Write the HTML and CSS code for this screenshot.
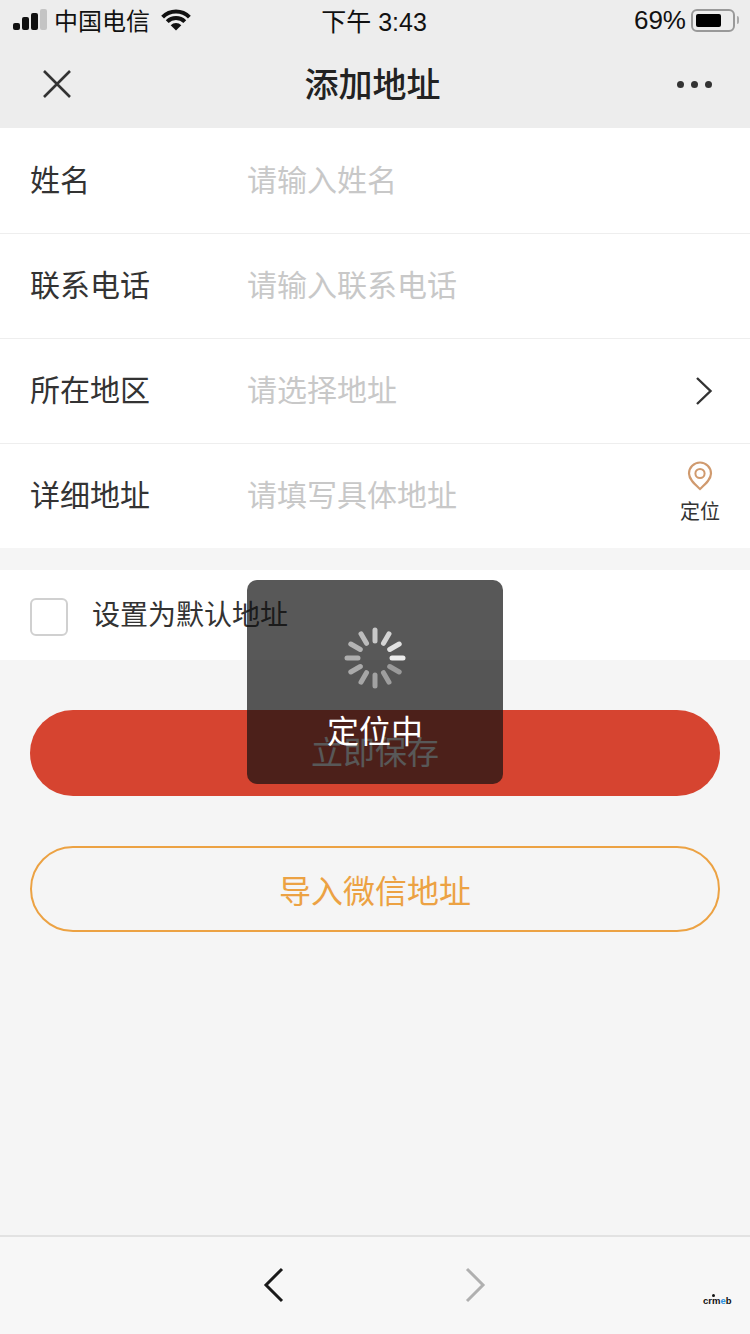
FILE: index.html
```html
<!DOCTYPE html>
<html lang="zh-CN">
<head>
  <meta charset="UTF-8">
  <meta name="viewport" content="width=device-width, initial-scale=1.0">
  <title>添加地址</title>
  <link rel="stylesheet" href="styles.css">
</head>
<body>
  <div class="page">
    <header class="top">
      <div class="status">
        <div class="status-left">
          <div class="signal"><i class="s1"></i><i class="s2"></i><i class="s3"></i><i class="s4"></i></div>
          <span>中国电信</span>
          <svg class="wifi" width="30" height="22" viewBox="0 0 30 22">
            <path d="M1.600 8.100A19 19 0 0 1 28.400 8.100" fill="none" stroke="#111" stroke-width="4"/>
            <path d="M6.200 12.700A12.500 12.500 0 0 1 23.800 12.700" fill="none" stroke="#111" stroke-width="4"/>
            <path d="M9.700 16.200A7.500 7.500 0 0 1 20.300 16.200L15 21.500z" fill="#111"/>
          </svg>
        </div>
        <div class="status-time">下午 3:43</div>
        <div class="status-right">
          <span>69%</span>
          <div class="battery"><div class="battery-fill"></div></div>
          <div class="battery-tip"></div>
        </div>
      </div>
      <div class="nav">
        <svg width="30" height="30" viewBox="0 0 30 30">
          <path d="M2 2l26 26M28 2L2 28" stroke="#333" stroke-width="2.6" fill="none"/>
        </svg>
        <h1>添加地址</h1>
        <div class="nav-more"><i></i><i></i><i></i></div>
      </div>
    </header>

    <form class="form">
      <div class="row">
        <label>姓名</label>
        <div class="placeholder">请输入姓名</div>
      </div>
      <div class="row">
        <label>联系电话</label>
        <div class="placeholder">请输入联系电话</div>
      </div>
      <div class="row">
        <label>所在地区</label>
        <div class="placeholder">请选择地址</div>
        <svg class="row-arrow" width="18" height="30" viewBox="0 0 18 30">
          <path d="M2 2l13.500 13L2 28" stroke="#333" stroke-width="2.4" fill="none"/>
        </svg>
      </div>
      <div class="row">
        <label>详细地址</label>
        <div class="placeholder">请填写具体地址</div>
        <div class="locate">
          <svg width="26" height="30" viewBox="0 0 26 30">
            <path d="M13 28C8 23.500 2 18.500 2 12.500a11 11 0 0 1 22 0C24 18.500 18 23.500 13 28z" fill="none" stroke="#d09a6e" stroke-width="2.200"/>
            <circle cx="13" cy="12.500" r="4.600" fill="none" stroke="#d09a6e" stroke-width="2"/>
          </svg>
          <span>定位</span>
        </div>
      </div>
    </form>

    <div class="default-row">
      <div class="checkbox"></div>
      <span>设置为默认地址</span>
    </div>

    <div class="actions">
      <div class="btn btn-save">立即保存</div>
      <div class="btn btn-wechat">导入微信地址</div>
    </div>

    <footer class="bottom">
      <svg width="22" height="36" viewBox="0 0 22 36">
        <path d="M19 2L3 18l16 16" stroke="#1a1a1a" stroke-width="3" fill="none"/>
      </svg>
      <svg width="22" height="36" viewBox="0 0 22 36">
        <path d="M3 2l16 16L3 34" stroke="#b0b0b0" stroke-width="3" fill="none"/>
      </svg>
    </footer>
    <div class="brand">crm<b>e</b>b</div>

    <div class="toast">
      <svg class="spinner" width="62" height="62" viewBox="0 0 62 62">
        <g stroke-width="5" stroke-linecap="round" fill="none">
          <path d="M31 3v11" stroke="#c8c8c8"/>
          <path d="M45 6.800l-5.500 9.500" stroke="#d4d4d4"/>
          <path d="M55.200 17l-9.500 5.500" stroke="#e0e0e0"/>
          <path d="M59 31H48" stroke="#ececec"/>
          <path d="M55.200 45l-9.500-5.500" stroke="#9a9a9a"/>
          <path d="M45 55.200l-5.500-9.500" stroke="#9e9e9e"/>
          <path d="M31 59V48" stroke="#a2a2a2"/>
          <path d="M17 55.200l5.500-9.500" stroke="#a6a6a6"/>
          <path d="M6.800 45l9.500-5.500" stroke="#aaa"/>
          <path d="M3 31h11" stroke="#aeaeae"/>
          <path d="M6.800 17l9.500 5.500" stroke="#b4b4b4"/>
          <path d="M17 6.800l5.500 9.500" stroke="#bcbcbc"/>
        </g>
      </svg>
      <div class="toast-text">定位中</div>
    </div>
  </div>
</body>
</html>
```

FILE: styles.css
```css
* {
  box-sizing: border-box;
}

body {
  margin: 0;
  padding: 0;
  background-color: #f5f5f5;
  font-family: "Noto Sans CJK SC", "Liberation Sans", sans-serif;
  color: #333;
}

.page {
  position: relative;
  width: 750px;
  height: 1334px;
  overflow: hidden;
  display: flex;
  flex-direction: column;
}

.top {
  height: 128px;
  background-color: #ededed;
}

.status {
  height: 40px;
  padding: 0 11px 0 13px;
  display: grid;
  grid-template-columns: 1fr auto 1fr;
  align-items: center;
  color: #111;
  font-size: 24px;
}

.status-left {
  display: flex;
  align-items: center;
}

.status-left span {
  margin-left: 7px;
  line-height: 40px;
}

.signal {
  display: flex;
  align-items: flex-end;
  gap: 2px;
  height: 21px;
  margin-bottom: 2px;
}

.signal i {
  display: block;
  width: 7px;
  border-radius: 2px;
  background-color: #111;
}

.s1 { height: 7px; }
.s2 { height: 13px; }
.s3 { height: 17px; }
.signal .s4 { height: 21px; background-color: #c4c4c4; }

.wifi {
  margin-left: 11px;
}

.status-time {
  margin-right: 4px;
  font-family: "Liberation Sans", "Noto Sans CJK SC", sans-serif;
  font-size: 25px;
}

.status-right {
  display: flex;
  align-items: center;
  justify-content: flex-end;
  font-family: "Liberation Sans", sans-serif;
  font-size: 26px;
}

.battery {
  width: 44px;
  height: 23px;
  margin-left: 5px;
  padding: 3px;
  border: 2px solid #999;
  border-radius: 6px;
}

.battery-fill {
  width: 25px;
  height: 100%;
  border-radius: 2px;
  background-color: #000;
}

.battery-tip {
  width: 2px;
  height: 8px;
  margin-left: 2px;
  border-radius: 0 2px 2px 0;
  background-color: #aaa;
}

.nav {
  height: 88px;
  padding: 0 38px 0 42px;
  display: flex;
  align-items: center;
  justify-content: space-between;
}

.nav h1 {
  margin: 0 4px 4px 0;
  font-size: 34px;
  font-weight: 500;
  color: #222;
}

.nav-more {
  display: flex;
  gap: 7px;
}

.nav-more i {
  display: block;
  width: 7px;
  height: 7px;
  border-radius: 50%;
  background-color: #333;
}

.form {
  background-color: #fff;
}

.row {
  height: 105px;
  padding: 0 30px;
  display: flex;
  align-items: center;
  border-bottom: 1px solid #eee;
  font-size: 30px;
}

.row:first-child {
  height: 106px;
}

.row:last-child {
  height: 104px;
  border-bottom: 0;
}

.row label {
  width: 217px;
  padding-bottom: 6px;
  color: #333;
}

.placeholder {
  flex: 1;
  padding-bottom: 6px;
  color: #c8c8c8;
}

.row-arrow {
  margin-right: 7px;
}

.locate {
  display: flex;
  flex-direction: column;
  align-items: center;
  margin-top: -7px;
  font-size: 20px;
  line-height: 26px;
  color: #333;
}

.locate svg {
  margin-bottom: 7px;
}

.default-row {
  height: 90px;
  margin-top: 22px;
  padding: 0 30px;
  display: flex;
  align-items: center;
  background-color: #fff;
  font-size: 28px;
}

.default-row span {
  margin-bottom: 4px;
}

.checkbox {
  width: 38px;
  height: 38px;
  margin: 4px 24px 0 0;
  border: 2px solid #d0d0d0;
  border-radius: 6px;
}

.actions {
  flex: 1;
  padding: 50px 30px 0;
  display: flex;
  flex-direction: column;
  gap: 50px;
}

.btn {
  height: 86px;
  border-radius: 43px;
  display: flex;
  align-items: center;
  justify-content: center;
  font-size: 32px;
}

.btn-save {
  padding-bottom: 6px;
  background-color: #d64430;
  color: #fff;
}

.btn-wechat {
  border: 2px solid #eca243;
  color: #eca243;
}

.bottom {
  height: 99px;
  padding: 0 264px 2px 263px;
  display: flex;
  align-items: center;
  justify-content: space-between;
  background-color: #f7f7f7;
  border-top: 2px solid #e2e2e2;
}

.brand {
  position: absolute;
  left: 703px;
  top: 1294px;
  font-family: "Liberation Sans", sans-serif;
  font-size: 9.500px;
  font-weight: bold;
  line-height: 14px;
  color: #111;
}

.brand::before {
  content: "";
  position: absolute;
  left: 9px;
  top: 0;
  width: 3px;
  height: 3px;
  border-radius: 50%;
  background-color: #111;
}

.brand b {
  color: #2a8fe0;
}

.toast {
  position: absolute;
  left: 247px;
  top: 580px;
  width: 256px;
  height: 204px;
  border-radius: 10px;
  background-color: rgba(17, 17, 17, 0.7);
  display: flex;
  flex-direction: column;
  align-items: center;
  color: #fff;
}

.spinner {
  margin-top: 47px;
}

.toast-text {
  margin-top: 17px;
  font-size: 32px;
  line-height: 46px;
}
```
